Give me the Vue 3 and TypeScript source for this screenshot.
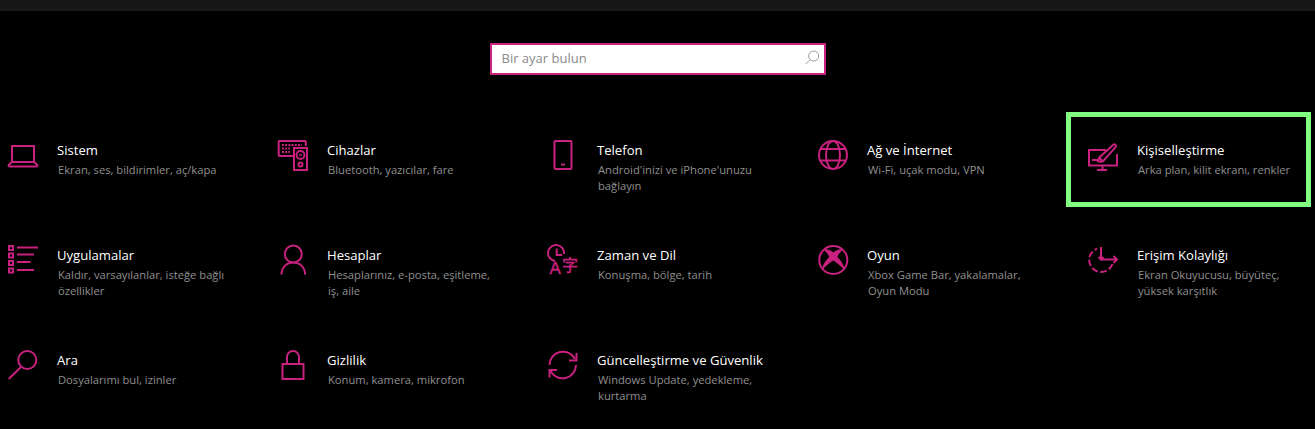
<script setup lang="ts">
interface Item {
  icon: string
  title: string
  lines: string[]
}

const items: Item[] = [
  { icon: 'laptop', title: 'Sistem', lines: ['Ekran, ses, bildirimler, aç/kapa'] },
  { icon: 'devices', title: 'Cihazlar', lines: ['Bluetooth, yazıcılar, fare'] },
  { icon: 'phone', title: 'Telefon', lines: ["Android'inizi ve iPhone'unuzu", 'bağlayın'] },
  { icon: 'globe', title: 'Ağ ve İnternet', lines: ['Wi-Fi, uçak modu, VPN'] },
  { icon: 'brush', title: 'Kişiselleştirme', lines: ['Arka plan, kilit ekranı, renkler'] },
  { icon: 'apps', title: 'Uygulamalar', lines: ['Kaldır, varsayılanlar, isteğe bağlı', 'özellikler'] },
  { icon: 'person', title: 'Hesaplar', lines: ['Hesaplarınız, e-posta, eşitleme,', 'iş, aile'] },
  { icon: 'time', title: 'Zaman ve Dil', lines: ['Konuşma, bölge, tarih'] },
  { icon: 'xbox', title: 'Oyun', lines: ['Xbox Game Bar, yakalamalar,', 'Oyun Modu'] },
  { icon: 'access', title: 'Erişim Kolaylığı', lines: ['Ekran Okuyucusu, büyüteç,', 'yüksek karşıtlık'] },
  { icon: 'search', title: 'Ara', lines: ['Dosyalarımı bul, izinler'] },
  { icon: 'lock', title: 'Gizlilik', lines: ['Konum, kamera, mikrofon'] },
  { icon: 'sync', title: 'Güncelleştirme ve Güvenlik', lines: ['Windows Update, yedekleme,', 'kurtarma'] },
]
</script>

<template>
  <div class="page">
    <div class="topbar"></div>
    <div class="search-row">
      <div class="search">
        <span class="placeholder">Bir ayar bulun</span>
        <svg class="search-icon" width="16" height="16" viewBox="0 0 16 16" fill="none" stroke="#999" stroke-width="1">
          <circle cx="9.7" cy="6" r="5" />
          <path d="M6 9.7 1.5 14.2" />
        </svg>
      </div>
    </div>
    <div class="grid">
      <div v-for="item in items" :key="item.title" class="cell">
        <div v-if="item.icon === 'brush'" class="highlight"></div>
        <svg class="icon" width="32" height="32" viewBox="0 0 32 32" fill="none" stroke="#c8217f" stroke-width="2">
          <template v-if="item.icon === 'laptop'">
            <path d="M4 22V6h22v16" />
            <path d="M4 22h22l3.2 2.8c.6.7.2 1.6-.7 1.6H1.500c-.9 0-1.300-.9-.7-1.600z" />
          </template>
          <template v-else-if="item.icon === 'devices'">
            <path d="M15 16H1.500a.8.8 0 0 1-.8-.8V1.800a.8.8 0 0 1 .8-.8h25.500a.8.8 0 0 1 .8.8V6" />
            <rect x="16" y="8" width="13" height="22" />
            <circle cx="22.500" cy="15" r="4" />
            <circle cx="22.500" cy="15" r="1" stroke-width="1" />
            <circle cx="22.500" cy="24.500" r="2" />
            <path d="M4 5h20M4 8.500h8M4 12h8" stroke-width="2" stroke-dasharray="2 1.200" />
          </template>
          <template v-else-if="item.icon === 'phone'">
            <rect x="6.500" y="1" width="17" height="28" rx="1" />
            <path d="M13 24.500h4" />
          </template>
          <template v-else-if="item.icon === 'globe'">
            <circle cx="15" cy="15" r="14" />
            <ellipse cx="15" cy="15" rx="7" ry="14" />
            <path d="M3 9h24M3 20.500h24" />
          </template>
          <template v-else-if="item.icon === 'brush'">
            <path d="M18 10H1v15.500h28V14" />
            <path d="M14.500 26v4M9 30h10" />
            <path d="M4 20h6" />
            <path d="M11 17.500l3.500 3.500M13 16l12.300-11.300c1.300-1.200 3.500.7 2.400 2.300L17 19c-1.500 2.500-4 3.500-7 2 .5-2.500 1-4 3-5z" />
          </template>
          <template v-else-if="item.icon === 'apps'">
            <rect x="1" y="1" width="4" height="4" />
            <rect x="1" y="8.500" width="4" height="4" />
            <rect x="1" y="16" width="4" height="4" />
            <rect x="1" y="23.500" width="4" height="4" />
            <path d="M9 2.500h21M9 9.500h17M9 17h13.500M9 25h17" />
          </template>
          <template v-else-if="item.icon === 'person'">
            <circle cx="15.300" cy="9" r="8.500" />
            <path d="M3.500 29.500c0-7 5-12 11.800-12s11.800 5 11.800 12" />
          </template>
          <template v-else-if="item.icon === 'time'">
            <path d="M7 16a8 8 0 1 1 9-7" />
            <path d="M8.700 3.500V10h5.500" />
            <text x="1.500" y="29" class="glyph">A</text>
            <text x="14" y="26" class="glyph cjk">字</text>
          </template>
          <template v-else-if="item.icon === 'xbox'">
            <circle cx="15.300" cy="15" r="14" />
            <path
              fill="#c8217f"
              stroke="none"
              d="M5.500 4.500C9.500 3.500 13 5.500 15.300 7.500c2.500-2 6-4 10-3-3 2.500-5 5-6 7.500 3.500 3.500 7 8 7.500 13.500-3.500-4-7.500-7.500-11.500-10-4 2.500-8 6-11.500 10 .5-5.500 4-10 7.500-13.500-1-2.500-3-5-6-7.500z"
            />
          </template>
          <template v-else-if="item.icon === 'access'">
            <path d="M24.500 19A12 12 0 1 1 9 3.700" stroke-dasharray="6.500 2.500" />
            <path d="M13 2v12.500M10.500 12l2.500 2.500 2.500-2.500" />
            <path d="M13 14.500h16M25.500 11l3.500 3.500-3.500 3.500" />
          </template>
          <template v-else-if="item.icon === 'search'">
            <circle cx="19.300" cy="10" r="9" />
            <path d="M13 17 .7 29" />
          </template>
          <template v-else-if="item.icon === 'lock'">
            <rect x="4.500" y="14" width="21" height="15" />
            <path d="M9 14V7a6 6 0 0 1 12 0v7" />
          </template>
          <template v-else-if="item.icon === 'sync'">
            <path d="M1.500 15a13.500 13.500 0 0 1 25.500-6" />
            <path d="M28.500 3v7.500h-7.500" />
            <path d="M28 15a13.500 13.500 0 0 1-25.500 6" />
            <path d="M1.500 27.500V20h7.500" />
          </template>
        </svg>
        <div class="text">
          <div class="title">{{ item.title }}</div>
          <div v-for="line in item.lines" :key="line" class="sub">{{ line }}</div>
        </div>
      </div>
    </div>
  </div>
</template>

<style>
html,
body {
  background: #000;
}
</style>

<style scoped>
.page {
  width: 1315px;
  height: 429px;
  overflow: hidden;
  background: #000;
  font-family: "Open Sans", "Noto Sans", sans-serif;
}

.topbar {
  height: 11px;
  background: #171717;
}

.search-row {
  display: flex;
  justify-content: center;
  margin-top: 32px;
}

.search {
  box-sizing: border-box;
  width: 336px;
  height: 32px;
  border: 2px solid #c8217f;
  background: #fff;
  display: flex;
  align-items: center;
  justify-content: space-between;
  padding: 0 4px 2px 10px;
}

.placeholder {
  font-size: 13px;
  color: #8a8a8a;
}

.search-icon {
  flex: none;
}

.grid {
  display: grid;
  grid-template-columns: repeat(5, 270px);
  grid-auto-rows: 105px;
  padding-left: 8px;
  margin-top: 65px;
}

.cell {
  position: relative;
  display: flex;
}

.icon {
  flex: none;
  width: 32px;
  height: 32px;
  margin-right: 17px;
  overflow: visible;
}

.glyph {
  font-family: "Liberation Sans", sans-serif;
  font-size: 17px;
  fill: #c8217f;
  stroke: #c8217f;
  stroke-width: 0.4px;
}

.cjk {
  font-family: "Noto Sans CJK SC", sans-serif;
  font-size: 16px;
}

.title {
  font-size: 13.1px;
  line-height: 20px;
  color: #fff;
  margin-bottom: 2px;
}

.sub {
  font-size: 11.2px;
  line-height: 16px;
  color: #8f8f8f;
  padding-left: 1px;
  white-space: nowrap;
}

.highlight {
  position: absolute;
  left: -22px;
  top: -28px;
  box-sizing: border-box;
  width: 245px;
  height: 95px;
  border: 5px solid #80ff80;
}
</style>
